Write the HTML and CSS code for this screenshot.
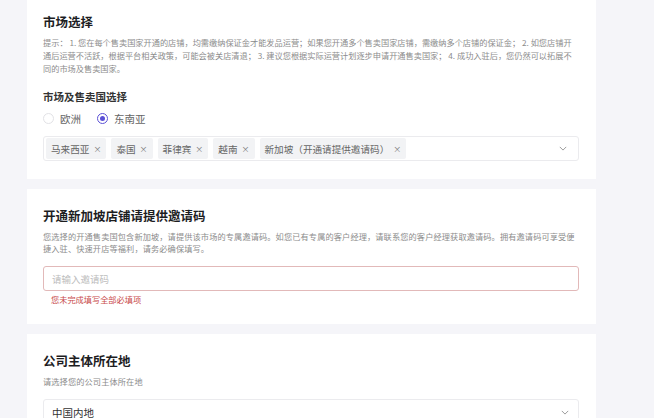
FILE: index.html
```html
<!DOCTYPE html>
<html lang="zh-CN">
<head>
<meta charset="utf-8">
<link rel="stylesheet" href="styles.css">
</head>
<body>
<div class="page">
  <section class="card card-first">
    <h2 class="title">市场选择</h2>
    <p class="hint">提示：&nbsp;1. 您在每个售卖国家开通的店铺，均需缴纳保证金才能发品运营；如果您开通多个售卖国家店铺，需缴纳多个店铺的保证金；&nbsp;2. 如您店铺开通后运营不活跃，根据平台相关政策，可能会被关店清退；&nbsp;3. 建议您根据实际运营计划逐步申请开通售卖国家；&nbsp;4. 成功入驻后，您仍然可以拓展不同的市场及售卖国家。</p>
    <div class="label">市场及售卖国选择</div>
    <div class="radios">
      <span class="radio"><span class="dot"></span>欧洲</span>
      <span class="radio checked"><span class="dot"></span>东南亚</span>
    </div>
    <div class="select tags">
      <span class="tag">马来西亚<span class="x">×</span></span>
      <span class="tag">泰国<span class="x">×</span></span>
      <span class="tag">菲律宾<span class="x">×</span></span>
      <span class="tag">越南<span class="x">×</span></span>
      <span class="tag">新加坡（开通请提供邀请码）<span class="x">×</span></span>
      <svg class="chev" viewBox="0 0 10 6" width="8" height="5"><path d="M1 1 L5 5 L9 1" fill="none" stroke="#999" stroke-width="1.2"/></svg>
    </div>
  </section>

  <section class="card">
    <h2 class="title">开通新加坡店铺请提供邀请码</h2>
    <p class="desc">您选择的开通售卖国包含新加坡，请提供该市场的专属邀请码。如您已有专属的客户经理，请联系您的客户经理获取邀请码。拥有邀请码可享受便捷入驻、快速开店等福利，请务必确保填写。</p>
    <div class="input error"><span class="placeholder">请输入邀请码</span></div>
    <div class="err-msg">您未完成填写全部必填项</div>
  </section>

  <section class="card">
    <h2 class="title">公司主体所在地</h2>
    <p class="desc">请选择您的公司主体所在地</p>
    <div class="select single">
      <span class="value">中国内地</span>
      <svg class="chev" viewBox="0 0 10 6" width="8" height="5"><path d="M1 1 L5 5 L9 1" fill="none" stroke="#999" stroke-width="1.2"/></svg>
    </div>
  </section>
</div>
</body>
</html>
```

FILE: styles.css
```css
* { box-sizing: border-box; }
html, body {
  margin: 0;
  padding: 0;
  background: #f5f5f9;
  font-family: "Noto Sans CJK SC", "Noto Sans", sans-serif;
  color: #333;
}
.page {
  width: 654px;
  height: 418px;
  overflow: hidden;
  padding: 0 58px 0 27px;
  display: flex;
  flex-direction: column;
  gap: 10px;
}
.card {
  background: #fff;
  padding: 19px 17px 19px 16px;
  display: flex;
  flex-direction: column;
  flex-shrink: 0;
}
.card-first {
  padding-top: 14px;
  padding-bottom: 18px;
}
.title {
  margin: 0;
  font-size: 12.5px;
  line-height: 16px;
  font-weight: 700;
  color: #1d1d1f;
}
.hint {
  margin: 6px 0 0;
  font-size: 8.2px;
  line-height: 13px;
  color: #8c8c8c;
}
.desc {
  margin: 6px 0 0;
  font-size: 8.2px;
  letter-spacing: 0.12px;
  line-height: 12px;
  color: #8c8c8c;
}
.label {
  margin-top: 15px;
  font-size: 10.5px;
  line-height: 14px;
  font-weight: 600;
  color: #333;
}
.radios {
  margin-top: 6px;
  display: flex;
  gap: 16px;
  height: 16px;
  align-items: center;
}
.radio {
  display: flex;
  align-items: center;
  gap: 6px;
  font-size: 10.5px;
  color: #666;
}
.radio .dot {
  width: 11px;
  height: 11px;
  border-radius: 50%;
  border: 1px solid #e2e2e6;
  background: #fff;
  display: inline-flex;
  align-items: center;
  justify-content: center;
}
.radio.checked .dot {
  border-color: #5b50d6;
}
.radio.checked .dot::after {
  content: "";
  width: 5px;
  height: 5px;
  border-radius: 50%;
  background: #5b50d6;
}
.select {
  margin-top: 10px;
  border: 1px solid #ebebee;
  border-radius: 3px;
  display: flex;
  align-items: center;
  position: relative;
}
.tags {
  height: 25px;
  padding: 1px 2px;
  gap: 5px;
}
.tag {
  height: 21px;
  background: #f2f3f5;
  border-radius: 2px;
  padding: 0 5px 0 5px;
  display: inline-flex;
  align-items: center;
  font-size: 9.6px;
  color: #666;
  white-space: nowrap;
}
.tag .x {
  margin-left: 4px;
  font-size: 8px;
  color: #777;
}
.chev {
  margin-left: auto;
  margin-right: 9px;
}
.input {
  margin-top: 12px;
  height: 25px;
  border: 1px solid #e2b9b9;
  border-radius: 3px;
  display: flex;
  align-items: center;
  padding: 0 8px;
}
.placeholder {
  font-size: 9.5px;
  color: #bdbdbd;
}
.err-msg {
  margin-top: 2px;
  padding-left: 8px;
  font-size: 8.2px;
  line-height: 12px;
  color: #c84a4a;
}
.single {
  margin-top: 12px;
  height: 26px;
  padding: 0 0 0 8px;
}
.value {
  font-size: 10.5px;
  color: #333;
}
```
